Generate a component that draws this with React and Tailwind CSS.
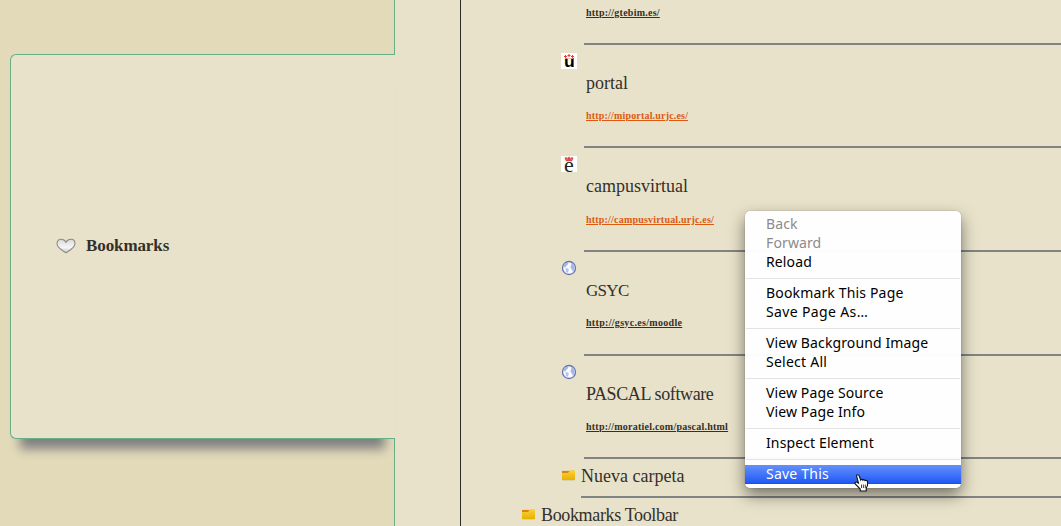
import React from 'react';

function Crest({ letter }) {
  return (
    <div className="relative size-4 bg-white">
      <span
        className={
          letter === 'u'
            ? 'absolute left-[3px] top-[2px] origin-left scale-x-110 font-["Liberation_Sans"] text-[16px] font-bold leading-[13px] text-black'
            : 'absolute left-[3px] top-[2px] font-["Liberation_Serif"] text-[22px] leading-[13px] text-[#222222]'
        }
      >
        {letter}
      </span>
      {letter === 'u' ? (
        <svg className="absolute left-0 top-0" width="16" height="16" viewBox="0 0 16 16">
          <path d="M3 3.500h3M6.500 2.500h3M10 3.500h3M4.500 2v3M8 1v3M11.500 2v3" stroke="#f33a32" strokeWidth="1" />
          <path d="M4 5.500h8" stroke="#f9b4ae" strokeWidth=".8" />
        </svg>
      ) : (
        <svg className="absolute left-0 top-0" width="16" height="16" viewBox="0 0 16 16">
          <path d="M3.500 2 5 1l1.500 1L8 .5 9.500 2 11 1l1.500 1-1.500 3.300H5z" fill="#dc4b48" />
          <path d="M5.500 3h1M9.500 3h1" stroke="#fff" strokeWidth=".8" opacity=".7" />
        </svg>
      )}
    </div>
  );
}

function Globe() {
  return (
    <svg width="16" height="16" viewBox="0 0 16 16">
      <circle cx="8" cy="8" r="6.500" fill="#fafcff" stroke="#6473b5" strokeWidth="1.300" />
      <path d="M2.500 7 3.500 4 6 2.500l1.500.5-.5 1.500-1.500 1-.5 1.500-1 .5z" fill="#a9b8e2" />
      <path d="m4.500 8 2.500.5 1 1.500-1.500 3-1.500-1z" fill="#b7c4e8" />
      <path d="m9.500 3.500 1.500-.5 2 2 .8 2.500-.8 3-1.500 1-.5-2-1.500-1.500V6l1-1z" fill="#a9b8e2" />
    </svg>
  );
}

function Folder() {
  return (
    <svg width="13" height="11" viewBox="0 0 13 11">
      <defs>
        <linearGradient id="folder" x1="0" y1="0" x2="0" y2="1">
          <stop offset="0" stopColor="#fbd13c" />
          <stop offset="1" stopColor="#e9b000" />
        </linearGradient>
      </defs>
      <rect x=".2" y=".8" width="12.600" height="9.800" rx=".8" fill="#b9a66c" opacity=".6" />
      <path d="M0 1h7l1-.8h4.500q.5 0 .5.500V10H0z" fill="url(#folder)" />
      <path d="M0 1h7.500L6 3H0z" fill="#d98608" />
    </svg>
  );
}

function Heart() {
  return (
    <svg width="20" height="16" viewBox="0 0 20 16">
      <defs>
        <linearGradient id="heart" x1="0" y1="0" x2="0" y2="1">
          <stop offset="0" stopColor="#d9d9d9" />
          <stop offset=".6" stopColor="#f6f6f6" />
          <stop offset="1" stopColor="#c8c8c8" />
        </linearGradient>
      </defs>
      <path d="M10 14.800C7.500 12.800 1 10.200 1 5.800 1 2.900 2.800 1.300 5 1.300c2.300 0 4 1.200 5 3 1-1.800 2.700-3 5-3 2.200 0 4 1.600 4 4.500 0 4.400-6.500 7-9 9z" fill="url(#heart)" stroke="#8d8b84" strokeWidth="1.100" />
    </svg>
  );
}

function Bookmark({ icon, title, url, height, titleClass = '', urlClass = '', urlGap = 'mt-4' }) {
  return (
    <div className={`flex shrink-0 ${height}`}>
      <div className="w-[23px] shrink-0 pt-2">{icon}</div>
      <div className="flex-1 border-b-2 border-[#808483] pl-[2px] pt-[27px]">
        <div className="h-[22px] text-[18px] leading-[22px]"><span className={titleClass}>{title}</span></div>
        <div className={`h-3 text-[10px] font-bold leading-3 ${urlGap}`}><span className={`underline ${urlClass}`}>{url}</span></div>
      </div>
    </div>
  );
}

const groups = [
  [['Back', 'text-[#8b8b8b]'], ['Forward', 'text-[#8b8b8b]'], ['Reload', '']],
  [['Bookmark This Page', 'tracking-[0.16px]'], ['Save Page As…', 'tracking-[0.36px]']],
  [['View Background Image', ''], ['Select All', 'tracking-[0.25px]']],
  [['View Page Source', ''], ['View Page Info', '']],
  [['Inspect Element', '']],
];

function ContextMenu() {
  return (
    <div className='absolute left-[745px] top-[211px] h-[277px] w-[216px] rounded-[5px] bg-white/97 pt-1 font-["Noto_Sans",sans-serif] text-[14px] tracking-[0.12px] text-black shadow-[0_7px_16px_rgba(0,0,0,0.5),0_0_1px_rgba(0,0,0,0.5)]'>
      {groups.map((items, i) => (
        <div key={i}>
          {items.map(([label, tone]) => (
            <div key={label} className={`h-[19px] pl-[21px] leading-[18px] whitespace-nowrap ${tone}`}>{label}</div>
          ))}
          <div className="h-3 px-px pt-[6px]"><div className="h-px bg-[#e3e3e3]" /></div>
        </div>
      ))}
      <div className="h-[19px] border-b border-[#1f50de] bg-linear-to-b from-[#6590fb] to-[#2058f5] pl-[21px] leading-[18px] tracking-[0.22px] text-white">Save This</div>
      <svg className="absolute left-[109px] top-[263px]" width="16" height="18" viewBox="0 0 16 18">
        <path d="M2.600 2.200C2.400.5 4.700.3 5.200 2L6.700 6c.4-1 1.900-1 2.200.2.600-.9 1.900-.6 2.100.4.900-.6 2.500.1 2.500 1.400v3.500l-1.300 2.800V17H6.200v-2L1.200 10c-.8-1.300.6-2.500 1.800-1.700l1.500.9z" fill="#fff" stroke="#111" strokeWidth="1.100" />
        <path d="M7.500 10.500V14M9.400 10.500V14M11.300 10.500V14" stroke="#111" strokeWidth=".8" />
      </svg>
    </div>
  );
}

export default function App() {
  return (
    <div className='relative flex h-[526px] w-[1061px] overflow-hidden bg-[#e8e2ca] font-["Liberation_Serif",serif] text-[#333029]'>
      <div className="flex w-[461px] shrink-0 border-r border-[#302d29]">
        <div className="flex w-[395px] flex-col bg-[#e3daba]">
          <div className="h-[54px] shrink-0 border-r border-[#66b086]" />
          <div className="flex h-[385px] shrink-0">
            <div className="w-[10px] shrink-0" />
            <div className="relative z-10 flex flex-1 rounded-l-[6px] border border-r-0 border-[#66b086] bg-[#e8e2ca] pl-[45px] shadow-[0_20px_10px_-10px_#808080]">
              <div className="flex h-[382px] items-center gap-[10px]">
                <Heart />
                <span className="text-[17px] font-bold leading-6 tracking-[-0.1px]">Bookmarks</span>
              </div>
            </div>
          </div>
          <div className="-mt-px flex-1 border-r border-[#66b086]" />
        </div>
      </div>
      <div className="flex min-w-0 flex-1 flex-col">
        <div className="flex flex-1 flex-col pl-[100px]">
          <div className="ml-[23px] h-[45px] shrink-0 border-b-2 border-[#808483] pl-[2px] pt-[7px]">
            <div className="text-[10px] font-bold leading-3"><span className="underline tracking-[0.24px]">http://gtebim.es/</span></div>
          </div>
          <Bookmark icon={<Crest letter="u" />} title="portal" url="http://miportal.urjc.es/" height="h-[103px]" urlClass="text-[#dd5a0c] tracking-[0.18px]" />
          <Bookmark icon={<Crest letter="e" />} title="campusvirtual" url="http://campusvirtual.urjc.es/" height="h-[104px]" urlClass="text-[#dd5a0c] tracking-[0.2px]" urlGap="mt-[17px]" />
          <Bookmark icon={<Globe />} title="GSYC" url="http://gsyc.es/moodle" height="h-[104px]" titleClass="text-[17px] tracking-[-0.7px]" urlClass="tracking-[0.31px]" />
          <Bookmark icon={<Globe />} title="PASCAL software" url="http://moratiel.com/pascal.html" height="h-[103px]" titleClass="tracking-[-0.38px]" urlClass="tracking-[0.23px]" />
          <div className="flex h-[39px] shrink-0">
            <div className="w-5 shrink-0 pl-px pt-[11px]"><Folder /></div>
            <div className="flex-1 border-b-2 border-[#808483] pt-[6px] text-[18px] leading-[22px]">Nueva carpeta</div>
          </div>
          <div className="-ml-[39px] flex h-7 shrink-0 overflow-hidden">
            <div className="w-[19px] shrink-0 pt-[11px]"><Folder /></div>
            <div className="pt-[6px] text-[18px] leading-[22px] tracking-[-0.35px]">Bookmarks Toolbar</div>
          </div>
        </div>
      </div>
      <ContextMenu />
    </div>
  );
}
